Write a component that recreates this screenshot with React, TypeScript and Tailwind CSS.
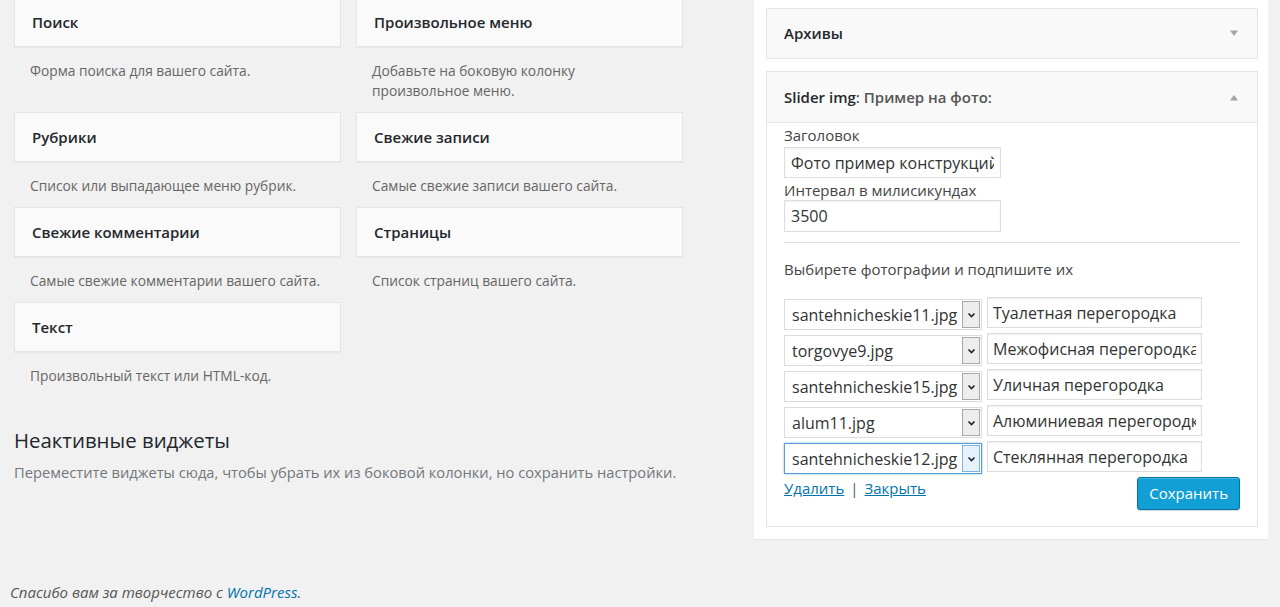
import React from 'react';

interface WidgetItem {
  title: string;
  description: string;
}

const availableWidgets: WidgetItem[] = [
  { title: 'Поиск', description: 'Форма поиска для вашего сайта.' },
  { title: 'Произвольное меню', description: 'Добавьте на боковую колонку произвольное меню.' },
  { title: 'Рубрики', description: 'Список или выпадающее меню рубрик.' },
  { title: 'Свежие записи', description: 'Самые свежие записи вашего сайта.' },
  { title: 'Свежие комментарии', description: 'Самые свежие комментарии вашего сайта.' },
  { title: 'Страницы', description: 'Список страниц вашего сайта.' },
  { title: 'Текст', description: 'Произвольный текст или HTML-код.' },
];

const slides = [
  { file: 'santehnicheskie11.jpg', caption: 'Туалетная перегородка' },
  { file: 'torgovye9.jpg', caption: 'Межофисная перегородка' },
  { file: 'santehnicheskie15.jpg', caption: 'Уличная перегородка' },
  { file: 'alum11.jpg', caption: 'Алюминиевая перегородка' },
  { file: 'santehnicheskie12.jpg', caption: 'Стеклянная перегородка' },
];

function Triangle({ up }: { up?: boolean }) {
  return (
    <svg width="10" height="7" viewBox="0 0 10 7" className="shrink-0">
      {up ? <polygon points="1,6.5 9,6.5 5,1" fill="#a0a5aa" /> : <polygon points="1,0.5 9,0.5 5,6" fill="#a0a5aa" />}
    </svg>
  );
}

function FakeSelect({ value, focused }: { value: string; focused?: boolean }) {
  return (
    <div
      className={`mt-[2px] flex h-[31px] w-[198px] shrink-0 items-stretch border bg-white p-[1px] ${
        focused ? 'border-[#5b9dd9] shadow-[0_0_2px_rgba(30,140,190,0.6)]' : 'border-[#dcdcdc]'
      }`}
    >
      <div className="flex-1 overflow-hidden whitespace-nowrap pl-[6px] text-[16px] leading-[29px] text-[#333]">{value}</div>
      <div
        className={`flex w-[18px] items-center justify-center border ${
          focused ? 'border-[#7eb4ea] bg-[#e5f1fb]' : 'border-[#a9a9a9] bg-[#ededed]'
        }`}
      >
        <svg width="9" height="6" viewBox="0 0 9 6">
          <polyline points="1.5,1.5 4.5,4.5 7.5,1.5" fill="none" stroke="#222" strokeWidth="1.6" />
        </svg>
      </div>
    </div>
  );
}

export default function App() {
  return (
    <div className="flex h-[607px] w-full flex-col overflow-hidden bg-[#f1f1f1] font-['Open_Sans',sans-serif] text-[#444]">
      <div className="flex flex-1 items-start">
        {/* left: available widgets */}
        <div className="ml-[14px] mt-[-3px] w-[669px]">
          <div className="grid grid-cols-2 gap-x-[15px]">
            {availableWidgets.map((w) => (
              <div key={w.title}>
                <div className="h-[50px] border border-[#e5e5e5] bg-[#fafafa] px-[17px] text-[15px] font-semibold leading-[48px] text-[#23282d] shadow-[0_1px_1px_rgba(0,0,0,0.04)]">
                  {w.title}
                </div>
                <p className="px-[16px] pb-[11px] pt-[14px] text-[13.75px] leading-[20px] text-[#666]">{w.description}</p>
              </div>
            ))}
          </div>

          <h3 className="mt-[29px] text-[20.4px] font-normal leading-[28px] text-[#23282d]">Неактивные виджеты</h3>
          <p className="mt-[8px] whitespace-nowrap text-[14.7px] leading-[20px] text-[#72777c]">
            Переместите виджеты сюда, чтобы убрать их из боковой колонки, но сохранить настройки.
          </p>
        </div>

        {/* right: sidebar */}
        <div className="ml-[71px] mt-[-10px] w-[514px] bg-white pb-[12px] pl-[12px] pr-[10px] pt-[18px] shadow-[0_1px_1px_rgba(0,0,0,0.04)]">
          <div className="flex h-[51px] items-center justify-between border border-[#e5e5e5] bg-[#f9f9f9] pl-[17px] pr-[18px]">
            <span className="text-[15px] font-semibold text-[#23282d]">Архивы</span>
            <Triangle />
          </div>

          <div className="mt-[12px] border border-[#e5e5e5]">
            <div className="flex h-[51px] items-center justify-between border-b border-[#e5e5e5] bg-[#f9f9f9] pl-[17px] pr-[18px]">
              <span className="text-[15px] font-semibold text-[#23282d]">
                Slider img<span className="text-[#555]">: Пример на фото:</span>
              </span>
              <Triangle up />
            </div>

            <div className="px-[17px] pb-[16px] pt-[2px] text-[15px] text-[#444]">
              <label className="block leading-[20px]">Заголовок</label>
              <input
                readOnly
                value="Фото пример конструкций"
                className="mt-[2px] block h-[31px] w-[217px] border border-[#ddd] bg-white px-[6px] text-[16px] text-[#333] shadow-[inset_0_1px_2px_rgba(0,0,0,0.07)] outline-none"
              />
              <label className="mt-[2px] block leading-[20px]">Интервал в милисикундах</label>
              <input
                readOnly
                value="3500"
                className="block h-[32px] w-[217px] border border-[#ddd] bg-white px-[6px] text-[16px] text-[#333] shadow-[inset_0_1px_2px_rgba(0,0,0,0.07)] outline-none"
              />
              <hr className="mt-[10px] border-t border-[#ddd]" />
              <p className="mt-[16px] leading-[20px]">Выбирете фотографии и подпишите их</p>

              <div className="mt-[18px] flex flex-col gap-[3px]">
                {slides.map((s, i) => (
                  <div key={s.file} className="flex items-start gap-[5px]">
                    <FakeSelect value={s.file} focused={i === slides.length - 1} />
                    <input
                      readOnly
                      value={s.caption}
                      className="block h-[31px] w-[215px] border border-[#ddd] bg-white px-[5px] text-[16px] text-[#333] shadow-[inset_0_1px_2px_rgba(0,0,0,0.07)] outline-none"
                    />
                  </div>
                ))}
              </div>

              <div className="mt-[3px] flex items-start justify-between">
                <div className="pt-[1px] text-[15px] leading-[20px]">
                  <a className="text-[#0073aa] underline">Удалить</a>
                  <span className="mx-[6px] text-[#555]">|</span>
                  <a className="text-[#0073aa] underline">Закрыть</a>
                </div>
                <button className="h-[33px] rounded-[3px] border border-[#0074a2] bg-[#129fd6] px-[11px] text-[15px] text-white shadow-[inset_0_1px_0_rgba(120,200,230,0.5),0_1px_0_rgba(0,0,0,0.15)]">
                  Сохранить
                </button>
              </div>
            </div>
          </div>
        </div>
      </div>

      <footer className="px-[10px] pb-[5px] text-[15px] italic leading-[20px] text-[#555]">
        Спасибо вам за творчество с <a className="text-[#0073aa]">WordPress</a>.
      </footer>
    </div>
  );
}
